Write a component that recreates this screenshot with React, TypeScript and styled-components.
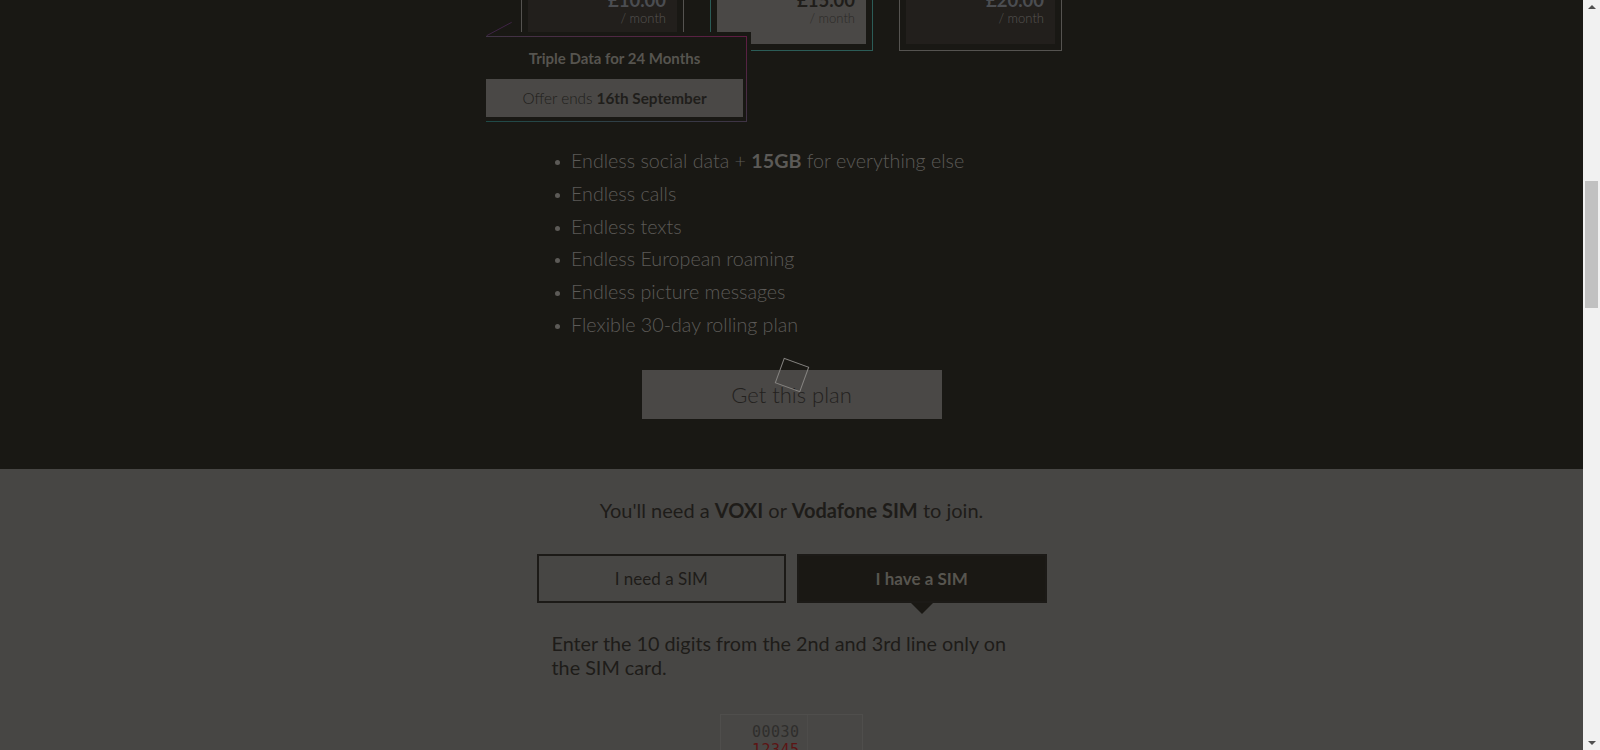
import styled, {createGlobalStyle} from "styled-components";

const GlobalStyle = createGlobalStyle`
    html, body {
        margin: 0;
        padding: 0;
        overflow: hidden;
        background: #191814;
    }
    * {
        box-sizing: border-box;
    }
`;

const Screen = styled.div`
    display: flex;
    width: 1600px;
    height: 750px;
    font-family: Lato, "Liberation Sans", sans-serif;
`;

const Main = styled.main`
    position: relative;
    flex: 1;
    height: 750px;
    overflow: hidden;
    display: flex;
    flex-direction: column;
`;

const DarkSection = styled.section`
    background: #191814;
    height: 469px;
    flex-shrink: 0;
`;

const LightSection = styled.section`
    background: #474644;
    flex: 1;
    padding-top: 29px;
`;

const Column = styled.div<{ $width: number }>`
    width: ${p => p.$width}px;
    margin: 0 auto;
`;

// the page is scrolled: the top of the plan cards sits above the window
const CardsRow = styled.div`
    position: relative;
    display: flex;
    gap: 26px;
    margin-top: -31px;
`;

const Card = styled.div<{ $selected?: boolean }>`
    width: 163px;
    padding: 6px;
    border: 1px solid ${p => p.$selected ? "#2b5c57" : "#555350"};
`;

const CardInner = styled.div<{ $selected?: boolean }>`
    background: ${p => p.$selected ? "#4a4846" : "#221f1c"};
    padding: 14px 11px 17px;
    text-align: right;
`;

const Price = styled.div<{ $selected?: boolean }>`
    font-size: 18.5px;
    font-weight: 700;
    line-height: 20px;
    color: ${p => p.$selected ? "#1f1d1a" : "#4b4d51"};
`;

const PerMonth = styled.div<{ $selected?: boolean }>`
    font-size: 13px;
    font-weight: 300;
    line-height: 17px;
    color: ${p => p.$selected ? "#2b2926" : "#575552"};
`;

const Offer = styled.div`
    position: absolute;
    left: -35px;
    top: 63px;
    width: 265px;
    height: 90px;
    background: #191814;
`;

const OfferTail = styled.svg`
    position: absolute;
    left: 0;
    top: -12px;
`;

const OfferFrame = styled.div`
    position: absolute;
    top: 4px;
    right: 4px;
    bottom: 0;
    left: 0;
    border: 1px solid;
    border-left-width: 0;
    border-image: linear-gradient(to top right, #1f4b48, #5f1c42) 1;
    padding: 0 3px 4px 0;
    display: flex;
    flex-direction: column;
`;

const OfferTitle = styled.div`
    height: 42px;
    display: flex;
    align-items: center;
    justify-content: center;
    font-size: 15px;
    font-weight: 700;
    color: #56544f;
`;

const OfferEnds = styled.div`
    flex: 1;
    background: #4a4846;
    display: flex;
    align-items: center;
    justify-content: center;
    font-size: 15.3px;
    font-weight: 300;
    color: #201e1b;

    b {
        font-weight: 700;
        margin-left: 4px;
    }
`;

const FeatureList = styled.ul`
    list-style: none;
    margin: 94px 0 0;
    padding: 0 0 0 50px;
`;

const Feature = styled.li`
    position: relative;
    font-size: 19.7px;
    font-weight: 300;
    line-height: 32.8px;
    color: #5c5a57;

    &::before {
        content: "";
        position: absolute;
        left: -16px;
        top: 15px;
        width: 5px;
        height: 5px;
        border-radius: 50%;
        background: #5c5a57;
    }

    b {
        font-weight: 700;
    }
`;

const PlanButton = styled.button`
    display: block;
    width: 300px;
    height: 49px;
    margin: 28px auto 0;
    border: 0;
    background: #4a4846;
    font-family: inherit;
    font-size: 22px;
    font-weight: 300;
    color: #23211e;
`;

const Prompt = styled.p`
    margin: 0;
    text-align: center;
    font-size: 20px;
    line-height: 24px;
    color: #1e1c19;

    b {
        font-weight: 700;
    }
`;

const SimToggle = styled.div`
    display: flex;
    gap: 11px;
    margin-top: 32px;
`;

const ToggleButton = styled.button<{ $active?: boolean }>`
    position: relative;
    flex: 1;
    height: 49px;
    border: 2px solid #1c1a17;
    background: ${p => p.$active ? "#1a1814" : "transparent"};
    font-family: inherit;
    font-size: 17px;
    font-weight: ${p => p.$active ? 700 : 400};
    color: ${p => p.$active ? "#57554f" : "#1e1c19"};

    &::after {
        content: "";
        display: ${p => p.$active ? "block" : "none"};
        position: absolute;
        left: 50%;
        bottom: -13px;
        margin-left: -11px;
        border-left: 11px solid transparent;
        border-right: 11px solid transparent;
        border-top: 11px solid #1a1814;
    }
`;

const Instruction = styled.p`
    margin: 29px 0 0;
    padding: 0 15px;
    font-size: 19.8px;
    line-height: 23.5px;
    color: #1e1c19;
`;

const SimCard = styled.div`
    display: flex;
    width: 143px;
    height: 90px;
    margin: 35px auto 0;
    border: 1px solid #4f4e4c;
    background: #484745;
`;

const SimChip = styled.div`
    width: 87px;
    border-right: 1px solid #4d4c4a;
    padding: 8px 0 0 31px;
    font-family: "DejaVu Sans Mono", "Liberation Mono", monospace;
    font-size: 15px;
    line-height: 18px;
    letter-spacing: 0.5px;
    color: #2f2e2c;
    white-space: nowrap;
`;

const SimRed = styled.div`
    color: #5c1414;
`;

const Spinner = styled.div`
    position: absolute;
    left: 50%;
    top: 50%;
    width: 27px;
    height: 27px;
    border: 1.5px solid #858380;
    transform: translate(-50%, -50%) rotate(20deg);
`;

const ScrollBar = styled.div`
    width: 17px;
    height: 750px;
    background: #f1f1f1;
    position: relative;
`;

const ScrollArrow = styled.div<{ $down?: boolean }>`
    position: absolute;
    left: 5px;
    ${p => p.$down ? "bottom: 5px;" : "top: 5px;"}
    border-left: 4px solid transparent;
    border-right: 4px solid transparent;
    ${p => p.$down ? "border-top: 4px solid #505050;" : "border-bottom: 4px solid #505050;"}
`;

const ScrollThumb = styled.div`
    position: absolute;
    left: 2px;
    right: 2px;
    top: 181px;
    height: 127px;
    background: #c1c1c1;
`;

const plans = [
  { price: "£10.00" },
  { price: "£15.00", selected: true },
  { price: "£20.00" }
];

const features = [
  <>Endless social data + <b>15GB</b> for everything else</>,
  <>Endless calls</>,
  <>Endless texts</>,
  <>Endless European roaming</>,
  <>Endless picture messages</>,
  <>Flexible 30-day rolling plan</>
];

export default function App() {
  return (
    <>
      <GlobalStyle />
      <Screen>
        <Main>
          <DarkSection>
            <Column $width={541}>
              <CardsRow>
                {plans.map(plan => (
                  <Card key={plan.price} $selected={plan.selected}>
                    <CardInner $selected={plan.selected}>
                      <Price $selected={plan.selected}>{plan.price}</Price>
                      <PerMonth $selected={plan.selected}>/ month</PerMonth>
                    </CardInner>
                  </Card>
                ))}
                <Offer>
                  <OfferTail width="28" height="17" viewBox="0 0 28 17">
                    <line x1="0.7" y1="15.7" x2="25.7" y2="2.3" stroke="#3f2446" strokeWidth="1" />
                  </OfferTail>
                  <OfferFrame>
                    <OfferTitle>Triple Data for 24 Months</OfferTitle>
                    <OfferEnds>Offer ends <b>16th September</b></OfferEnds>
                  </OfferFrame>
                </Offer>
              </CardsRow>
              <FeatureList>
                {features.map((f, i) => <Feature key={i}>{f}</Feature>)}
              </FeatureList>
              <PlanButton>Get this plan</PlanButton>
            </Column>
          </DarkSection>
          <LightSection>
            <Column $width={510}>
              <Prompt>You'll need a <b>VOXI</b> or <b>Vodafone SIM</b> to join.</Prompt>
              <SimToggle>
                <ToggleButton>I need a SIM</ToggleButton>
                <ToggleButton $active>I have a SIM</ToggleButton>
              </SimToggle>
              <Instruction>Enter the 10 digits from the 2nd and 3rd line only on the SIM card.</Instruction>
              <SimCard>
                <SimChip>
                  00030
                  <SimRed>12345</SimRed>
                </SimChip>
              </SimCard>
            </Column>
          </LightSection>
          <Spinner />
        </Main>
        <ScrollBar>
          <ScrollArrow />
          <ScrollThumb />
          <ScrollArrow $down />
        </ScrollBar>
      </Screen>
    </>
  );
}
